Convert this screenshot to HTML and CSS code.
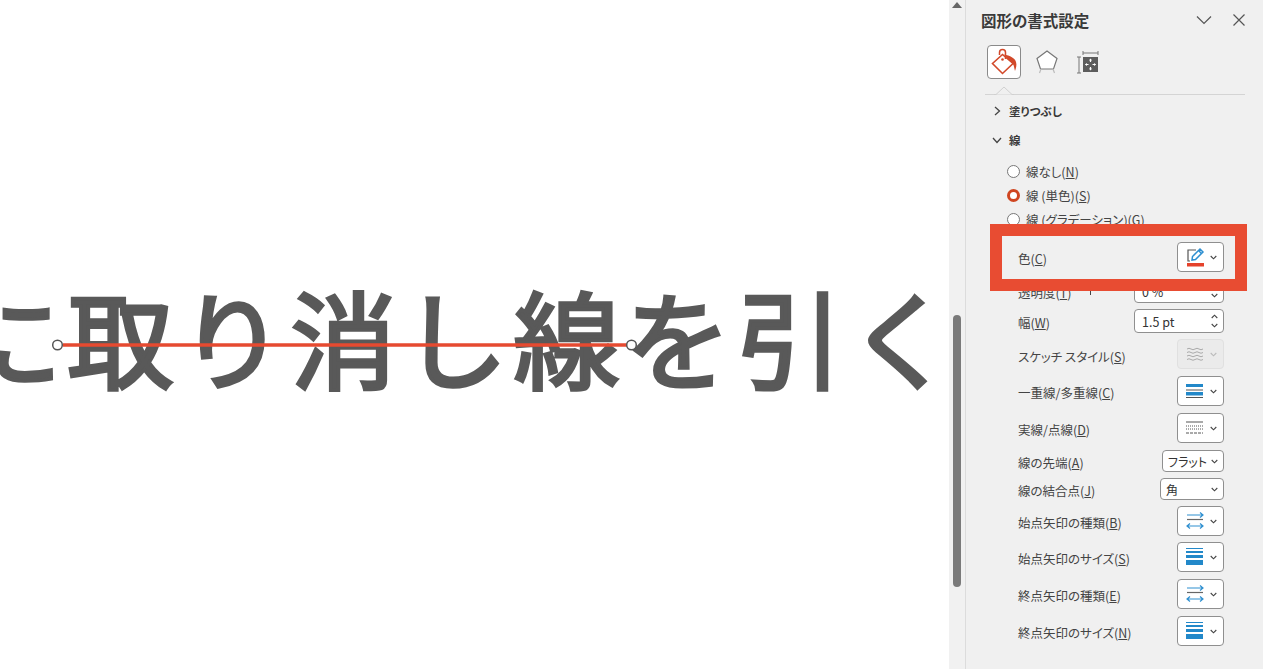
FILE: index.html
```html
<!DOCTYPE html>
<html lang="ja">
<head>
<meta charset="utf-8">
<title>図形の書式設定</title>
<link rel="stylesheet" href="styles.css">
</head>
<body>
<div class="app">
  <main class="canvas">
    <div class="slide-text">に取り消し線を引く</div>
    <svg class="strike" width="590" height="20" viewBox="0 0 590 20" aria-hidden="true">
      <line x1="13" y1="10" x2="581" y2="10" stroke="#e64a30" stroke-width="3.500"/>
      <circle cx="7.500" cy="10" r="4.800" fill="#fff" stroke="#555" stroke-width="1.500"/>
      <circle cx="581.500" cy="10" r="4.800" fill="#fff" stroke="#555" stroke-width="1.500"/>
    </svg>
  </main>

  <div class="scrollbar">
    <span class="scroll-up"></span>
    <span class="scroll-thumb"></span>
  </div>

  <aside class="pane">
    <header class="pane-head">
      <h1 class="pane-title">図形の書式設定</h1>
      <svg class="head-icon" width="16" height="16" viewBox="0 0 16 16"><path d="M1 4.500 8 11.500 15 4.500" fill="none" stroke="#555" stroke-width="1.200"/></svg>
      <svg class="head-icon close" width="14" height="14" viewBox="0 0 14 14"><path d="M1.500 1.500 12.500 12.500M12.500 1.500 1.500 12.500" fill="none" stroke="#555" stroke-width="1.200"/></svg>
    </header>

    <nav class="tabs">
      <div class="tab active">
        <svg width="30" height="30" viewBox="0 0 30 30">
          <path d="M13.500 7.500 3.500 16.500 13.500 26.500 24 16.500Z" fill="#fff" stroke="#d2492a" stroke-width="1.600"/>
          <path d="M10.500 8V5.500a3 3 0 0 1 6 0V12" fill="none" stroke="#d2492a" stroke-width="1.500"/>
          <circle cx="13.500" cy="12.500" r="1.300" fill="#d2492a"/>
          <path d="M15 7.500C21 8.500 26 11 27 15C28 18 27 21 26 24C25 20 25 17 22 15Z" fill="#d2492a"/>
        </svg>
      </div>
      <div class="tab">
        <svg width="26" height="28" viewBox="0 0 26 28">
          <path d="M13 3 23 10.500 19.500 21H6.500L3 10.500Z" fill="#fff" stroke="#777" stroke-width="1.200"/>
          <path d="M7 21 5.500 25M19 21 20.500 25" fill="none" stroke="#bbb" stroke-width="1.200"/>
        </svg>
      </div>
      <div class="tab">
        <svg width="26" height="28" viewBox="0 0 26 28">
          <path d="M7 5H22M7 3V7M22 3V7M1 9H5M1 25H5M3 9V25" fill="none" stroke="#777" stroke-width="1"/>
          <rect x="7" y="9" width="15" height="15" fill="#5c5c5c"/>
          <path d="M14.500 11V14M14.500 19V22M9.500 16.500H12.500M16.500 16.500H19.500" fill="none" stroke="#fff" stroke-width="1.200"/>
          <path d="M13 12.500 14.500 10.500 16 12.500ZM13 20.500 14.500 22.500 16 20.500ZM11 15 9 16.500 11 18ZM18 15 20 16.500 18 18Z" fill="#fff"/>
        </svg>
      </div>
    </nav>

    <div class="divider">
      <svg class="notch" width="20" height="9" viewBox="0 0 20 9"><path d="M0 8.500H2L10 1 18 8.500H20" fill="#f0f0f0" stroke="#d0d0d0"/></svg>
    </div>

    <div class="section first">
      <svg class="chev" width="10" height="10" viewBox="0 0 10 10"><path d="M3 1 7.500 5 3 9" fill="none" stroke="#444" stroke-width="1.300"/></svg>
      <span>塗りつぶし</span>
    </div>
    <div class="section">
      <svg class="chev" width="10" height="10" viewBox="0 0 10 10"><path d="M1 3 5 7.500 9 3" fill="none" stroke="#444" stroke-width="1.300"/></svg>
      <span>線</span>
    </div>

    <div class="radios">
      <div class="radio-row"><span class="radio"></span><span>線なし(<u>N</u>)</span></div>
      <div class="radio-row"><span class="radio on"></span><span>線 (単色)(<u>S</u>)</span></div>
      <div class="radio-row"><span class="radio"></span><span>線 (グラデーション)(<u>G</u>)</span></div>
    </div>

    <div class="rows">
      <div class="row h36"><label>色(<u>C</u>)</label>
        <div class="btn">
          <svg width="20" height="22" viewBox="0 0 20 22">
            <path d="M10 4H2V15H4" fill="none" stroke="#555" stroke-width="1.200"/>
            <path d="M6 14 6.500 10.500 14 3 17 6 9.500 13.500Z" fill="#fff" stroke="#2e8fd0" stroke-width="1.500"/>
            <path d="M12.500 4.500 15.500 7.500" stroke="#2e8fd0" stroke-width="1.500"/>
            <rect x="1" y="17" width="17" height="3.500" fill="#e5422b"/>
          </svg>
          <svg class="caret" width="7" height="5" viewBox="0 0 7 5"><path d="M.7 1 3.500 3.800 6.300 1" fill="none" stroke="#444" stroke-width="1.100"/></svg>
        </div>
      </div>
      <div class="row h32"><label>透明度(<u>T</u>)</label><span class="tick"></span>
        <div class="spin w90"><span class="val">0 %</span>
          <svg class="arrows" width="7" height="16" viewBox="0 0 7 16"><path d="M.7 5 3.500 2.200 6.300 5M.7 11 3.500 13.800 6.300 11" fill="none" stroke="#444" stroke-width="1.100"/></svg>
        </div>
      </div>
      <div class="row h28"><label>幅(<u>W</u>)</label>
        <div class="spin w90"><span class="val">1.5 pt</span>
          <svg class="arrows" width="7" height="16" viewBox="0 0 7 16"><path d="M.7 5 3.500 2.200 6.300 5M.7 11 3.500 13.800 6.300 11" fill="none" stroke="#444" stroke-width="1.100"/></svg>
        </div>
      </div>
      <div class="row h38"><label class="low">スケッチ スタイル(<u>S</u>)</label>
        <div class="btn disabled">
          <svg width="18" height="14" viewBox="0 0 18 14"><path d="M1 2q2-1.500 4 0t4 0 4 0 4 0M1 5.500q2-1.500 4 0t4 0 4 0 4 0M1 9q2-1.500 4 0t4 0 4 0 4 0M1 12.500q2-1.500 4 0t4 0 4 0 4 0" fill="none" stroke="#aaa"/></svg>
          <svg class="caret" width="7" height="5" viewBox="0 0 7 5"><path d="M.7 1 3.500 3.800 6.300 1" fill="none" stroke="#bbb" stroke-width="1.100"/></svg>
        </div>
      </div>
      <div class="row h36"><label>一重線/多重線(<u>C</u>)</label>
        <div class="btn">
          <svg width="18" height="14" viewBox="0 0 18 14"><rect y="0" width="17" height="3" fill="#2288c9"/><rect y="5.500" width="17" height="1" fill="#555"/><rect y="8" width="17" height="3.500" fill="#2288c9"/><rect y="13" width="17" height="1" fill="#555"/></svg>
          <svg class="caret" width="7" height="5" viewBox="0 0 7 5"><path d="M.7 1 3.500 3.800 6.300 1" fill="none" stroke="#444" stroke-width="1.100"/></svg>
        </div>
      </div>
      <div class="row h38"><label>実線/点線(<u>D</u>)</label>
        <div class="btn">
          <svg width="18" height="14" viewBox="0 0 18 14"><path d="M0 1H17" stroke="#555"/><path d="M0 5H17M0 8H17" stroke="#555" stroke-dasharray="1 1"/><path d="M0 12H17" stroke="#555" stroke-dasharray="3 1"/></svg>
          <svg class="caret" width="7" height="5" viewBox="0 0 7 5"><path d="M.7 1 3.500 3.800 6.300 1" fill="none" stroke="#444" stroke-width="1.100"/></svg>
        </div>
      </div>
      <div class="row h28"><label>線の先端(<u>A</u>)</label>
        <div class="select w62"><span class="val">フラット</span>
          <svg class="caret" width="7" height="5" viewBox="0 0 7 5"><path d="M.7 1 3.500 3.800 6.300 1" fill="none" stroke="#444" stroke-width="1.100"/></svg>
        </div>
      </div>
      <div class="row h28"><label>線の結合点(<u>J</u>)</label>
        <div class="select w64"><span class="val">角</span>
          <svg class="caret" width="7" height="5" viewBox="0 0 7 5"><path d="M.7 1 3.500 3.800 6.300 1" fill="none" stroke="#444" stroke-width="1.100"/></svg>
        </div>
      </div>
      <div class="row h36"><label>始点矢印の種類(<u>B</u>)</label>
        <div class="btn">
          <svg width="18" height="18" viewBox="0 0 18 18"><use href="#arrows"/></svg>
          <svg class="caret" width="7" height="5" viewBox="0 0 7 5"><path d="M.7 1 3.500 3.800 6.300 1" fill="none" stroke="#444" stroke-width="1.100"/></svg>
        </div>
      </div>
      <div class="row h36"><label>始点矢印のサイズ(<u>S</u>)</label>
        <div class="btn">
          <svg width="18" height="18" viewBox="0 0 18 18"><use href="#sizes"/></svg>
          <svg class="caret" width="7" height="5" viewBox="0 0 7 5"><path d="M.7 1 3.500 3.800 6.300 1" fill="none" stroke="#444" stroke-width="1.100"/></svg>
        </div>
      </div>
      <div class="row h38"><label>終点矢印の種類(<u>E</u>)</label>
        <div class="btn">
          <svg width="18" height="18" viewBox="0 0 18 18"><use href="#arrows"/></svg>
          <svg class="caret" width="7" height="5" viewBox="0 0 7 5"><path d="M.7 1 3.500 3.800 6.300 1" fill="none" stroke="#444" stroke-width="1.100"/></svg>
        </div>
      </div>
      <div class="row h36"><label>終点矢印のサイズ(<u>N</u>)</label>
        <div class="btn">
          <svg width="18" height="18" viewBox="0 0 18 18"><use href="#sizes"/></svg>
          <svg class="caret" width="7" height="5" viewBox="0 0 7 5"><path d="M.7 1 3.500 3.800 6.300 1" fill="none" stroke="#444" stroke-width="1.100"/></svg>
        </div>
      </div>
    </div>

    <div class="callout"></div>
  </aside>
  <div class="edge"></div>
</div>

<svg class="defs" width="0" height="0" aria-hidden="true">
  <defs>
    <g id="arrows" fill="none" stroke-width="1.200">
      <path d="M1 3H17M14 .5 17 3 14 5.500" stroke="#2e8fd0"/>
      <path d="M1 7.500H17" stroke="#666"/>
      <path d="M1 14H17M4 11.500 1 14 4 16.500M14 11.500 17 14 14 16.500" stroke="#2e8fd0"/>
    </g>
    <g id="sizes">
      <rect y="0" width="17" height="1" fill="#2288c9"/>
      <rect y="3" width="17" height="2" fill="#2288c9"/>
      <rect y="7" width="17" height="3" fill="#2288c9"/>
      <rect y="12" width="17" height="5" fill="#2288c9"/>
    </g>
  </defs>
</svg>
</body>
</html>
```
FILE: styles.css
```css
* { box-sizing: border-box; }
html, body { margin: 0; height: 100%; overflow: hidden; background: #fff; }
body {
  font-family: "Noto Sans CJK JP", "Noto Sans", sans-serif;
  color: #444;
}
.app { display: flex; height: 669px; width: 1280px; }

.canvas { position: relative; width: 949px; overflow: hidden; background: #fff; }
.slide-text {
  margin: 255px 0 0 -44px;
  font-size: 106px;
  line-height: 160px;
  letter-spacing: 5.5px;
  font-weight: 400;
  -webkit-text-stroke: 3.5px #595959;
  color: #595959;
  white-space: nowrap;
}
.strike { position: absolute; left: 50px; top: 335px; }

.scrollbar {
  position: relative;
  width: 17px;
  background: #f1f1f1;
  border-right: 1px solid #dcdcdc;
}
.scroll-up {
  position: absolute; left: 3px; top: 2px;
  border-left: 5px solid transparent;
  border-right: 5px solid transparent;
  border-bottom: 6px solid #666;
}
.scroll-thumb {
  position: absolute; left: 4px; top: 315px;
  width: 8px; height: 272px;
  background: #7a7a7a; border-radius: 4px;
}

.pane { position: relative; width: 297px; background: #f0f0f0; font-size: 12.5px; font-feature-settings: "palt"; }
.edge { flex: 1; background: #fff; }

.pane-head { display: flex; align-items: center; height: 40px; padding: 0 17px 0 15px; }
.pane-title { flex: 1; margin: 0; font-size: 15.5px; font-weight: 700; color: #3a3a3a; }
.head-icon { margin-left: 19px; }
.head-icon.close { margin-left: 20px; }

.tabs { display: flex; align-items: center; height: 34px; margin-top: 5px; padding-left: 21px; gap: 10px; }
.tab { width: 32px; height: 34px; display: flex; align-items: center; justify-content: center; }
.tab.active { width: 34px; background: #fff; border: 1px solid #8a8a8a; border-radius: 4px; }

.divider { position: relative; height: 1px; margin: 15px 18px 0 19px; background: #d4d4d4; }
.notch { position: absolute; left: 9px; top: -8px; }

.section { display: flex; align-items: center; height: 29px; padding-left: 26px; gap: 7px; font-weight: 700; font-size: 11.5px; color: #3a3a3a; }
.section.first { margin-top: 1px; }

.radios { margin-top: 5px; padding-left: 41px; }
.radio-row { display: flex; align-items: center; height: 24px; gap: 6px; }
.radio { width: 13px; height: 13px; border-radius: 50%; background: #fff; border: 1px solid #777; }
.radio.on { border: 3.5px solid #cf4520; }

.rows { margin-top: 8px; padding: 0 39px 0 52px; }
.row { display: flex; align-items: center; justify-content: space-between; position: relative; }
.h28 { height: 28px; } .h32 { height: 32px; } .h36 { height: 36px; } .h38 { height: 38px; }
.row label { padding-top: 2px; white-space: nowrap; }
.row label.low { padding-top: 4px; }
.tick { position: absolute; left: 72px; top: 14px; width: 1px; height: 6px; background: #444; }

.btn, .spin, .select {
  display: flex; align-items: center;
  background: #fff; border: 1px solid #8f8f8f; border-radius: 4px;
}
.btn { width: 47px; height: 30px; justify-content: space-between; padding: 0 6px 0 8px; }
.btn.disabled { background: #ebebeb; border-color: #e0e0e0; }
.caret { flex: none; }
.spin { height: 24px; padding: 0 5px 0 7px; justify-content: space-between; }
.select { height: 22px; padding: 0 5px; justify-content: space-between; font-size: 12px; }
.w90 { width: 90px; } .w62 { width: 62px; } .w64 { width: 64px; }
.val { color: #333; }

.callout {
  position: absolute; left: 24px; top: 224px;
  width: 257px; height: 67px;
  border: 12px solid #e84c32;
}
.defs { position: absolute; }
```
